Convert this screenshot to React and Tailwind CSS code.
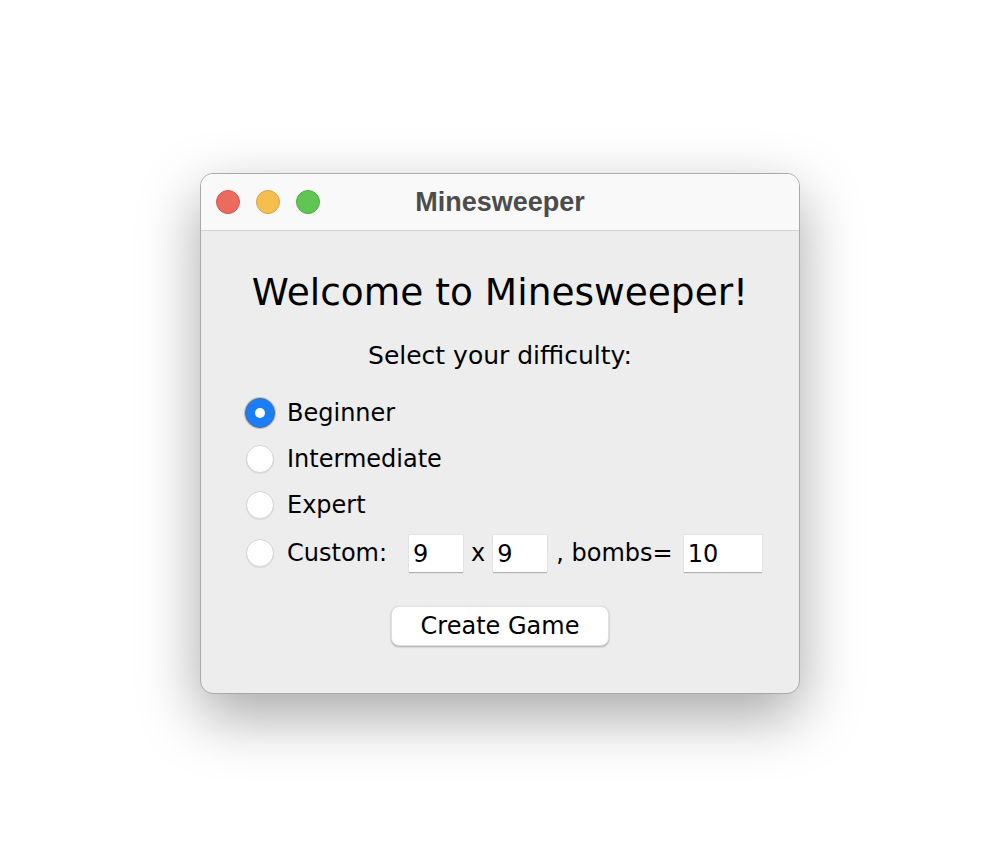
import React, { useState } from "react";

const font = { fontFamily: '"DejaVu Sans", "Liberation Sans", sans-serif' };

function Radio({ checked }) {
  return checked ? (
    <span className="w-[30px] h-[30px] rounded-full bg-[#1a7ef7] border border-[#4d6d95] shadow-[0_0_0_1px_rgba(90,110,140,0.35)] grid place-items-center shrink-0">
      <span className="w-[10px] h-[10px] rounded-full bg-white" />
    </span>
  ) : (
    <span className="w-[28px] h-[28px] mx-px rounded-full bg-white border border-[#d4d4d4] shadow-[0_1px_1px_rgba(0,0,0,0.08)] shrink-0" />
  );
}

function Field({ value, w }) {
  return (
    <span
      className={`${w} h-[38px] bg-white border-t border-[#e2e2e2] shadow-[0_1px_1px_rgba(0,0,0,0.25)] pl-[4px] flex items-center text-[24px] text-black`}
    >
      {value}
    </span>
  );
}

export default function App() {
  const [level, setLevel] = useState("beginner");
  const options = [
    { id: "beginner", label: "Beginner" },
    { id: "intermediate", label: "Intermediate" },
    { id: "expert", label: "Expert" },
  ];

  return (
    <div className="w-[1000px] h-[868px] bg-white pt-[173px] pl-[200px]" style={font}>
      <div className="w-[600px] h-[521px] rounded-[13px] border border-[#a9a9a9] bg-[#ededed] overflow-hidden shadow-[0_22px_60px_rgba(0,0,0,0.35)] flex flex-col">
        {/* title bar */}
        <div className="relative h-[57px] bg-[#f9f9f9] border-b border-[#d2d2d2] flex items-center justify-center shrink-0">
          <div className="absolute left-[15px] top-[16px] flex gap-[16px]">
            <span className="w-[24px] h-[24px] rounded-full bg-[#ed6a5e] border border-[#d3574c]" />
            <span className="w-[24px] h-[24px] rounded-full bg-[#f5bf4f] border border-[#d9a33c]" />
            <span className="w-[24px] h-[24px] rounded-full bg-[#61c554] border border-[#4fae43]" />
          </div>
          <span className="text-[27px] font-bold text-[#4c4c4c]" style={{ fontFamily: '"Liberation Sans", sans-serif' }}>
            Minesweeper
          </span>
        </div>

        {/* body */}
        <div className="flex flex-col items-center pt-[39px]">
          <h1 className="text-[37.5px] leading-[44px] text-black">Welcome to Minesweeper!</h1>
          <p className="mt-[27px] text-[25px] leading-[30px] text-black">Select your difficulty:</p>

          <div className="self-start ml-[44px] mt-[19px] flex flex-col">
            {options.map((o) => (
              <button
                key={o.id}
                onClick={() => setLevel(o.id)}
                className="h-[46px] flex items-center gap-[12px] text-[24px] text-black"
              >
                <Radio checked={level === o.id} />
                {o.label}
              </button>
            ))}
            <div className="h-[50px] flex items-center text-[24px] text-black">
              <button onClick={() => setLevel("custom")} className="flex items-center gap-[12px]">
                <Radio checked={level === "custom"} />
                Custom:
              </button>
              <span className="ml-[22px]"><Field value="9" w="w-[54px]" /></span>
              <span className="ml-[8px] mr-[8px]">x</span>
              <Field value="9" w="w-[54px]" />
              <span className="ml-[9px] mr-[11px]">, bombs=</span>
              <Field value="10" w="w-[78px]" />
            </div>
          </div>

          <button className="mt-[28px] w-[218px] h-[40px] rounded-[8px] bg-white shadow-[0_1px_2px_rgba(0,0,0,0.3)] border border-[#e0e0e0] text-[24px] text-black">
            Create Game
          </button>
        </div>
      </div>
    </div>
  );
}
